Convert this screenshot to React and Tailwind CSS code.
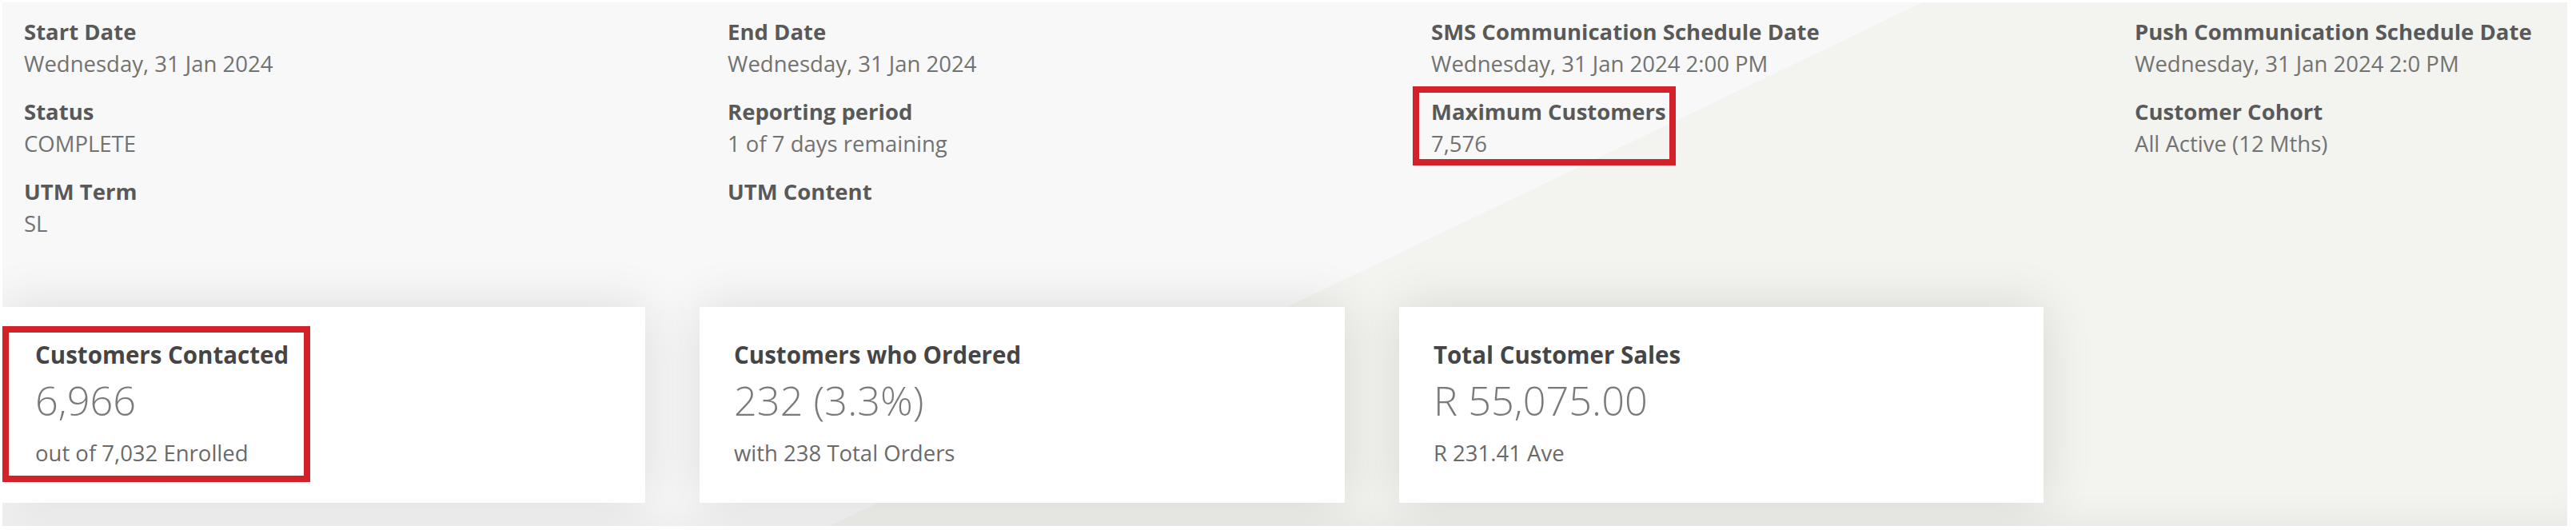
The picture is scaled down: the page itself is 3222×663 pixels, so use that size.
const fields = [
  [
    { label: 'Start Date', value: 'Wednesday, 31 Jan 2024' },
    { label: 'Status', value: 'COMPLETE' },
    { label: 'UTM Term', value: 'SL' },
  ],
  [
    { label: 'End Date', value: 'Wednesday, 31 Jan 2024' },
    { label: 'Reporting period', value: '1 of 7 days remaining' },
    { label: 'UTM Content', value: '' },
  ],
  [
    { label: 'SMS Communication Schedule Date', value: 'Wednesday, 31 Jan 2024 2:00 PM' },
    { label: 'Maximum Customers', value: '7,576', marked: true },
  ],
  [
    { label: 'Push Communication Schedule Date', value: 'Wednesday, 31 Jan 2024 2:0 PM' },
    { label: 'Customer Cohort', value: 'All Active (12 Mths)' },
  ],
]

const cards = [
  { title: 'Customers Contacted', value: '6,966', sub: 'out of 7,032 Enrolled', marked: true },
  { title: 'Customers who Ordered', value: '232 (3.3%)', sub: 'with 238 Total Orders' },
  { title: 'Total Customer Sales', value: 'R 55,075.00', sub: 'R 231.41 Ave' },
]

function Field({ label, value, marked }) {
  return (
    <div className="relative w-fit">
      {/* annotation box */}
      {marked && (
        <div className="absolute -left-[23px] -top-[12px] w-[329px] h-[99px] border-[8px] border-[#d32129]" />
      )}
      <div className="text-[27.5px] leading-[40px] font-bold text-[#595959]">{label}</div>
      <div className="text-[27.5px] leading-[40px] text-[#727272] h-[40px]">{value}</div>
    </div>
  )
}

function Card({ title, value, sub, marked }) {
  return (
    <div className="relative bg-white h-[245px] pt-[40px] pl-[43px] first:pl-[41px] shadow-[0_0_60px_rgba(0,0,0,0.12)]">
      {marked && (
        <div className="absolute left-0 top-[24px] w-[385px] h-[195px] border-[8px] border-[#d32129]" />
      )}
      <div className="text-[29.5px] leading-[40px] font-bold text-[#454545]">{title}</div>
      <div className="mt-[7px] text-[50.5px] leading-[60px] font-light text-[#7a7a7a]">{value}</div>
      <div className="mt-[16px] text-[27.5px] leading-[40px] text-[#6a6a6a]">{sub}</div>
    </div>
  )
}

export default function App() {
  return (
    <div
      className="w-[3222px] h-[663px] bg-white pt-[3px] pl-[3px] pr-[11px] pb-[5px]"
      style={{ fontFamily: '"Open Sans", "Noto Sans", sans-serif' }}
    >
      <div className="h-full overflow-hidden bg-[linear-gradient(154.4deg,#f8f8f8_52.5%,#f3f3ef_52.5%)] shadow-[inset_0_-40px_40px_-30px_rgba(0,0,0,0.05)]">
        <div className="grid grid-cols-[880px_880px_880px_1fr] pl-[27px] pt-[17px]">
          {fields.map((col, i) => (
            <div key={i} className="flex flex-col gap-[20px]">
              {col.map((f) => (
                <Field key={f.label} {...f} />
              ))}
            </div>
          ))}
        </div>
        <div className="grid grid-cols-[804px_807px_806px] gap-x-[68px] mt-[84px]">
          {cards.map((c) => (
            <Card key={c.title} {...c} />
          ))}
        </div>
      </div>
    </div>
  )
}
